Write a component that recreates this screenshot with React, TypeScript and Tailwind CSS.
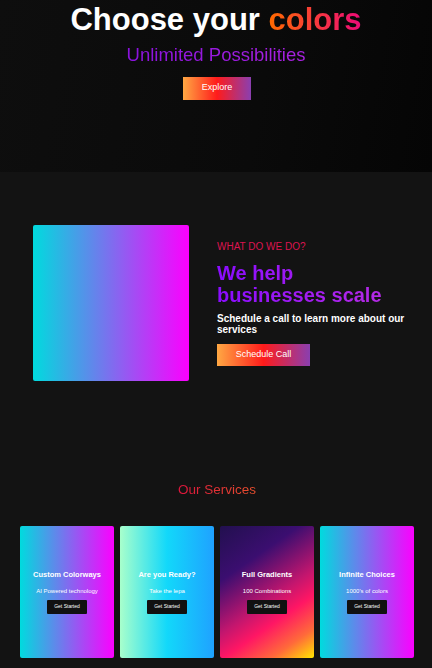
const cards = [
  {
    title: "Custom Colorways",
    text: "AI Powered technology",
    bg: "bg-[linear-gradient(to_right,#00dbde,#fc00ff)]",
  },
  {
    title: "Are you Ready?",
    text: "Take the lepa",
    bg: "bg-[linear-gradient(to_right,#a8ffcc,#12d8fa_50%,#1fa2ff)]",
  },
  {
    title: "Full Gradients",
    text: "100 Combinations",
    bg: "bg-[linear-gradient(145deg,#22104f_0%,#3b0e70_28%,#c3166e_55%,#ff1664_68%,#ff6a3a_85%,#ffe600_100%)]",
  },
  {
    title: "Infinite Choices",
    text: "1000's of colors",
    bg: "bg-[linear-gradient(to_right,#00dbde,#fc00ff)]",
  },
]

const btnGradient = "bg-[linear-gradient(to_right,#ffa843,#ff1b1b_50%,#8a3fb0)]"

export default function App() {
  return (
    <div className="min-h-[668px] bg-[#131313] font-['Liberation_Sans',Arial,sans-serif]">
      {/* hero */}
      <section className="flex h-[172px] flex-col items-center bg-[linear-gradient(100deg,#0e0e0e,#0a0a0a_60%,#050505)] pt-1">
        <h1 className="text-[31px] font-bold leading-none text-white">
          Choose your{" "}
          <span className="bg-[linear-gradient(to_right,#ff6a00,#ee0979)] bg-clip-text text-transparent">
            colors
          </span>
        </h1>
        <p className="mt-[11px] bg-[linear-gradient(to_right,#8a12dc,#a822e0)] bg-clip-text text-[18.5px] leading-none text-transparent">
          Unlimited Possibilities
        </p>
        <button
          className={`ml-[2px] mt-[12px] h-[23px] w-[68px] text-[9px] text-white ${btnGradient}`}
        >
          Explore
        </button>
      </section>

      {/* what we do */}
      <section className="flex items-center gap-[28px] pl-[33px] pt-[53px]">
        <div className="h-[156px] w-[156px] shrink-0 rounded-[2px] bg-[linear-gradient(to_right,#00dbde,#fc00ff)]" />
        <div className="flex w-[200px] flex-col items-start">
          <p className="text-[10px] uppercase leading-[12px] text-[#dc1450]">What do we do?</p>
          <h2 className="mt-[9px] bg-[linear-gradient(to_right,#8a0cff,#b52ae6)] bg-clip-text text-[20px] font-bold leading-[22px] text-transparent">
            We help
            <br />
            businesses scale
          </h2>
          <p className="mt-[7px] text-[10px] font-bold leading-[11px] text-white">
            Schedule a call to learn more about our services
          </p>
          <button
            className={`mt-[9px] h-[22px] w-[93px] text-[9px] text-white ${btnGradient}`}
          >
            Schedule Call
          </button>
        </div>
      </section>

      {/* services */}
      <section className="flex flex-col items-center pt-[101px]">
        <h2 className="ml-[2px] bg-[linear-gradient(to_right,#dc143c,#e8502e)] bg-clip-text text-[13.5px] leading-[16px] text-transparent">
          Our Services
        </h2>
        <div className="ml-[2px] mt-[28px] grid w-[394px] grid-cols-4 gap-[6px] pb-[10px]">
          {cards.map((c) => (
            <div
              key={c.title}
              className={`flex h-[132px] flex-col items-center justify-center rounded-[2px] ${c.bg}`}
            >
              <p className="text-[7.5px] font-bold leading-[9px] text-white">{c.title}</p>
              <p className="mt-[9px] text-[6px] leading-[7px] text-white">{c.text}</p>
              <button className="mt-[5px] h-[13.5px] w-[40px] rounded-[1px] bg-[#111] text-[5px] text-white">
                Get Started
              </button>
            </div>
          ))}
        </div>
      </section>
    </div>
  )
}
